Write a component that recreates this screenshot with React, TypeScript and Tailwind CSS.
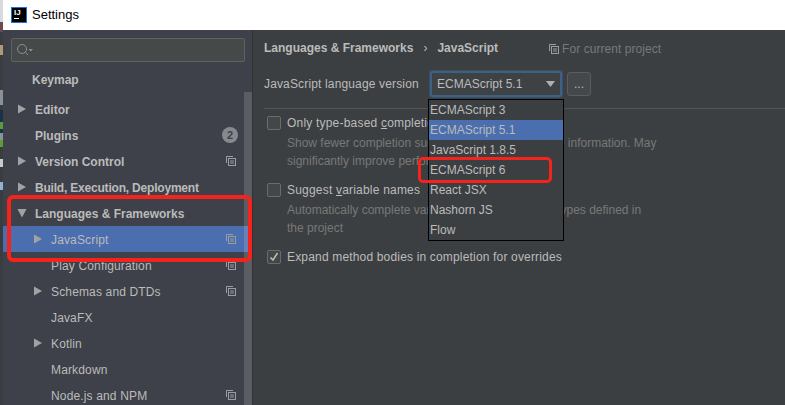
const sans = "font-['Liberation_Sans','Open_Sans',sans-serif]";

function Arrow({ down = false }: { down?: boolean }) {
  return (
    <svg width="10" height="10" viewBox="0 0 10 10" className="shrink-0">
      <path d={down ? "M0.5 1h9L5 9.5z" : "M1 .5l8 4.5-8 4.5z"} fill="#a0a2a4" />
    </svg>
  );
}

function CopyIcon() {
  return (
    <svg width="10" height="10" viewBox="0 0 10 10" fill="none" stroke="#9a9da1" className="shrink-0">
      <path d="M.5 7V.5H7" />
      <rect x="2.5" y="2.5" width="7" height="7" />
      <path d="M4 5h4M4 7h4" />
    </svg>
  );
}

function Row({
  label,
  indent,
  arrow,
  bold,
  tight,
  copy,
  badge,
  selected,
}: {
  label: string;
  indent: number;
  arrow?: "right" | "down";
  bold?: boolean;
  tight?: boolean;
  copy?: boolean;
  badge?: string;
  selected?: boolean;
}) {
  return (
    <div className={`flex h-[26px] items-center pr-[16px] ${selected ? "bg-[#4b6eaf]" : ""}`}>
      <div className={`flex items-center ${indent === 1 ? "w-[32px] pl-[14px]" : "w-[48px] pl-[30px]"}`}>
        {arrow && <Arrow down={arrow === "down"} />}
      </div>
      <span
        className={`flex-1 whitespace-nowrap pt-[1px] text-[12px] text-[#bbbbbb] ${bold ? "font-bold" : "tracking-[0.15px]"} ${tight ? "tracking-[-0.2px]" : ""}`}
      >
        {label}
      </span>
      {copy && <CopyIcon />}
      {badge && (
        <span className="-mr-[2px] flex h-[16px] w-[16px] items-center justify-center rounded-full bg-[#868a8e] text-[11px] font-bold text-[#3e4149]">
          {badge}
        </span>
      )}
    </div>
  );
}

function CheckBox({ checked }: { checked?: boolean }) {
  return (
    <div className="flex h-[14px] w-[14px] shrink-0 items-center justify-center rounded-[2px] border border-[#6b6b6b] bg-[#43474a]">
      {checked && (
        <svg width="10" height="10" viewBox="0 0 10 10" fill="none" stroke="#bbbbbb" strokeWidth="1.6">
          <path d="M1.5 5.5l2.5 2.5 4.5-7" />
        </svg>
      )}
    </div>
  );
}

export default function App() {
  return (
    <div className={`flex h-[405px] w-[785px] overflow-hidden bg-[#3c3f41] ${sans}`}>
      {/* Sliver of the window behind */}
      <div className="flex w-[3px] shrink-0 flex-col bg-[#3a3d40]">
        <div className="h-[22px] bg-[#d9d9d9]" />
        <div className="h-[10px] bg-[#6b4a4e]" />
        <div className="h-[13px]" />
        <div className="h-[10px] bg-[#b09a78]" />
        <div className="h-[35px]" />
        <div className="h-[15px] bg-[#8b9296]" />
        <div className="h-[5px]" />
        <div className="h-[12px] bg-[#16334a]" />
        <div className="h-[7px] bg-[#5c9a3a]" />
        <div className="h-[4px] bg-[#16334a]" />
        <div className="h-[7px] bg-[#8b9296]" />
        <div className="h-[7px] bg-[#5c9a3a]" />
        <div className="h-[12px]" />
        <div className="h-[8px] bg-[#c9cbcc]" />
        <div className="h-[15px]" />
        <div className="h-[8px] bg-[#8fb2d0]" />
      </div>

      <div className="flex min-w-0 flex-1 flex-col">
        {/* Title bar */}
        <div className="flex h-[30px] shrink-0 items-center gap-[5px] bg-white pl-[8px]">
          <div className="flex h-[16px] w-[16px] flex-col border border-[#1e73d8] bg-black px-[2px] text-[8px] font-bold leading-[9px] text-white">
            <span>IJ</span>
            <span className="mt-[1px] h-[1px] w-[5px] bg-white" />
          </div>
          <span className="text-[13px] text-black">Settings</span>
        </div>

        <div className="flex min-h-0 flex-1">
          {/* Sidebar */}
          <div className="relative w-[249px] shrink-0 bg-[#3e4149]">
            <div className="px-[8px] pt-[8px]">
              <div className="flex h-[24px] w-[234px] items-center rounded-[2px] border border-[#5f625f] bg-[#45494a] pl-[4px]">
                <svg width="18" height="16" viewBox="0 0 18 16" fill="none" stroke="#8e9194">
                  <circle cx="6" cy="7" r="4.5" />
                  <path d="M9.5 10.5l2.5 2.5" />
                  <path d="M12.5 7h4.5l-2.2 2.5z" fill="#8e9194" stroke="none" />
                </svg>
              </div>
            </div>
            <div className="mt-[4px] mb-[4px] flex h-[26px] items-center pl-[29px] pt-[1px] text-[12px] font-bold text-[#bbbbbb]">
              Keymap
            </div>
            <Row label="Editor" indent={1} arrow="right" bold />
            <Row label="Plugins" indent={1} bold badge="2" />
            <Row label="Version Control" indent={1} arrow="right" bold copy />
            <Row label="Build, Execution, Deployment" indent={1} arrow="right" bold tight />
            <Row label="Languages & Frameworks" indent={1} arrow="down" bold />
            <Row label="JavaScript" indent={2} arrow="right" copy selected />
            <Row label="Play Configuration" indent={2} copy />
            <Row label="Schemas and DTDs" indent={2} arrow="right" copy />
            <Row label="JavaFX" indent={2} />
            <Row label="Kotlin" indent={2} arrow="right" />
            <Row label="Markdown" indent={2} />
            <Row label="Node.js and NPM" indent={2} copy />
            {/* scrollbar */}
            <div className="absolute bottom-0 right-0 top-[62px] w-[8px] bg-white/15" />
            {/* Red annotation */}
            <div className="absolute left-[4px] top-[165px] h-[67px] w-[245px] rounded-[6px] border-[4px] border-[#f5231c]" />
          </div>

          {/* Main panel */}
          <div className="relative min-w-0 flex-1 border-l border-[#323232]">
            <div className="flex h-[36px] items-center pl-[11px] text-[12px] text-[#bbbbbb]">
              <span className="font-bold">Languages &amp; Frameworks</span>
              <span className="mx-[10px]">›</span>
              <span className="font-bold">JavaScript</span>
              <span className="ml-[51px] mr-[3px] mt-[2px]"><CopyIcon /></span>
              <span className="mt-[2px] tracking-[0.05px] text-[#787878]">For current project</span>
            </div>
            <div className="mt-[6px] flex h-[24px] items-center pl-[11px] text-[12px] text-[#bbbbbb]">
              <span className="w-[166px] tracking-[0.15px]">JavaScript language version</span>
              <div className="flex h-[26px] w-[132px] items-center justify-between rounded-[3px] border-[2px] border-[#3d6185] bg-[#3f4244] pl-[5px] pr-[4px] ring-1 ring-[#3d6185]/50">
                <span>ECMAScript 5.1</span>
                <svg width="10" height="6" viewBox="0 0 10 6"><path d="M0 0h9L4.5 6z" fill="#b0b0b0" /></svg>
              </div>
              <div className="ml-[5px] flex h-[24px] w-[24px] items-center justify-center rounded-[3px] border border-[#5a5c5e] bg-[#45484a]">...</div>
            </div>
            <div className="ml-[11px] mt-[12px] h-px bg-[#555555]" />

            <div className="mt-[7px] pl-[14px] text-[12px] leading-[18px]">
              <div className="flex h-[14px] items-center gap-[6px]">
                <CheckBox />
                <span className="tracking-[0.2px] text-[#bbbbbb]">Only type-based <u>c</u>ompletion</span>
              </div>
              <p className="ml-[20px] mt-[4px] w-[400px] text-[#787878]">
                Show fewer completion suggestions but with all type information. May significantly improve performance
              </p>
              <div className="mt-[13px] flex h-[14px] items-center gap-[6px]">
                <CheckBox />
                <span className="tracking-[0.2px] text-[#bbbbbb]">Suggest <u>v</u>ariable names</span>
              </div>
              <p className="ml-[20px] mt-[4px] w-[365px] text-[#787878]">
                Automatically complete variable names given their types defined in the project
              </p>
              <div className="mt-[13px] flex h-[14px] items-center gap-[6px]">
                <CheckBox checked />
                <span className="tracking-[0.17px] text-[#bbbbbb]">Expand method bodies in completion for overrides</span>
              </div>
            </div>

            {/* Dropdown popup */}
            <div className="absolute left-[175px] top-[69px] w-[136px] border border-black bg-[#3c3f41] text-[12px] text-[#bbbbbb]">
              {["ECMAScript 3", "ECMAScript 5.1", "JavaScript 1.8.5", "ECMAScript 6", "React JSX", "Nashorn JS", "Flow"].map((o) => (
                <div key={o} className={`flex h-[20px] items-center pl-px ${o === "ECMAScript 5.1" ? "bg-[#4b6eaf]" : ""}`}>
                  {o}
                </div>
              ))}
            </div>
            {/* Red annotation */}
            <div className="absolute left-[165px] top-[127px] h-[26px] w-[134px] rounded-[5px] border-[3px] border-[#f5231c]" />
          </div>
        </div>
      </div>
    </div>
  );
}
